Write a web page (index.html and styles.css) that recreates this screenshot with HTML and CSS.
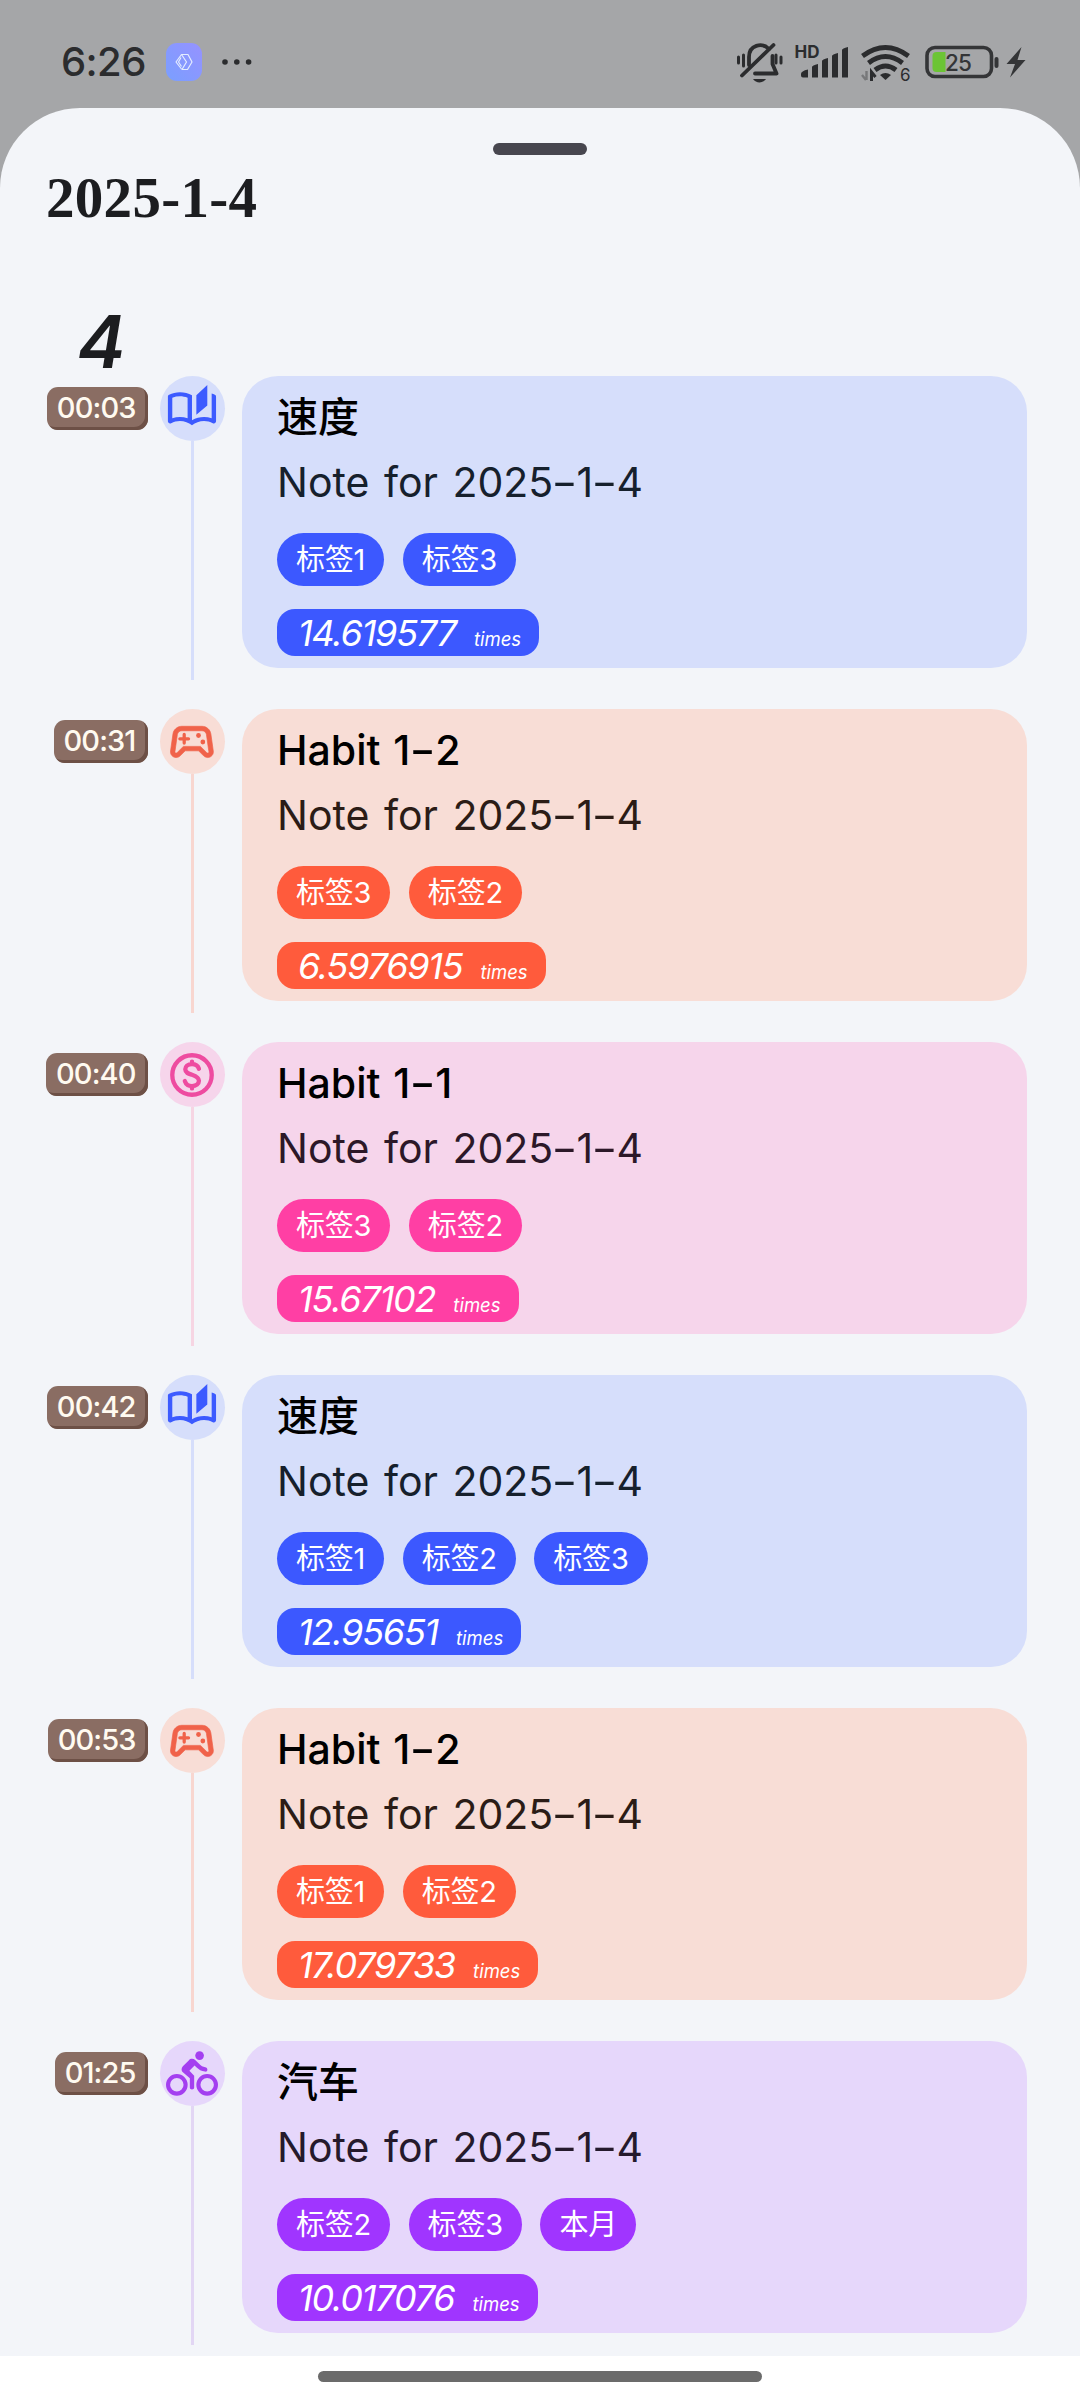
FILE: index.html
```html
<!DOCTYPE html>
<html lang="zh-CN">
<head>
<meta charset="utf-8">
<title>2025-1-4</title>
<link rel="stylesheet" href="styles.css">
</head>
<body>
<svg class="sprite" aria-hidden="true">
  <symbol id="book" viewBox="0 0 24 24"><path transform="translate(-.13 .45) scale(1.01 .95)" d="M22.47 5.2c-.47-.24-.96-.44-1.47-.61v12.03c-1.14-.41-2.31-.62-3.5-.62-1.9 0-3.78.54-5.5 1.58V5.48C10.38 4.55 8.51 4 6.5 4c-1.79 0-3.48.44-4.97 1.2C1.2 5.36 1 5.71 1 6.08v12.08c0 .58.47.99 1 .99.16 0 .32-.04.48-.12C3.69 18.4 5.05 18 6.5 18c2.07 0 3.98.82 5.5 2 1.52-1.18 3.43-2 5.5-2 1.45 0 2.81.4 4.02 1.04.16.08.32.12.48.12.52 0 1-.41 1-.99V6.08c0-.37-.2-.72-.53-.88zM10 16.62C8.86 16.21 7.69 16 6.5 16s-2.36.21-3.5.62V6.71C4.11 6.24 5.28 6 6.5 6c1.2 0 2.39.25 3.5.72v9.9zM19 .5l-5 5V15l5-4.5V.5z"/></symbol>
  <symbol id="game" viewBox="0 0 24 24"><path transform="translate(-.4 -.4) scale(1.03)" fill-rule="evenodd" stroke="currentColor" stroke-width=".3" d="M21.58 16.09l-1.09-7.66C20.21 6.46 18.52 5 16.53 5H7.47C5.48 5 3.79 6.46 3.51 8.43l-1.09 7.66C2.2 17.63 3.39 19 4.94 19c.68 0 1.32-.27 1.8-.75L9 16h6l2.25 2.25c.48.48 1.13.75 1.8.75 1.56 0 2.75-1.37 2.53-2.91zM19.48 16.81c-.08.09-.21.19-.42.19-.15 0-.29-.06-.39-.16L15.83 14H8.17l-2.84 2.84c-.1.1-.24.16-.39.16-.21 0-.34-.1-.42-.19-.08-.09-.16-.23-.13-.44l1.09-7.66C5.63 7.74 6.48 7 7.47 7h9.06c.99 0 1.84.74 1.98 1.72l1.09 7.66c.03.2-.05.34-.12.43z"/><path d="M8.4 8.5v4M6.4 10.5h4" fill="none" stroke="currentColor" stroke-width="1.500" stroke-linecap="round"/><circle cx="15" cy="9" r="1.1"/><circle cx="17" cy="12" r="1.1"/></symbol>
  <symbol id="coin" viewBox="0 0 24 24"><g fill="none" stroke="currentColor" stroke-width="2"><circle cx="12" cy="12" r="9.1"/><path stroke-linecap="round" d="M15.2 9.1C14.700 7.700 13.700 7 12 7c-2 0-3.100 1-3.100 2.400 0 1.600 1.500 2 3.100 2.500 1.800.6 3.200 1.200 3.200 2.800 0 1.400-1.300 2.400-3.200 2.400-1.700 0-2.800-.8-3.300-2.300M12 5.800v1M12 17.200v1"/></g></symbol>
  <symbol id="bike" viewBox="0 0 24 24"><circle cx="15.5" cy="3.5" r="2"/><g fill="none" stroke="currentColor" stroke-width="1.9"><circle cx="5" cy="17" r="4.05"/><circle cx="19" cy="17" r="4.05"/></g><path d="M10.8 10.5l2.4-2.4.8.8c1.1 1.1 2.4 1.8 4 2 .7.1 1.1-.3 1.1-.9 0-.7-.4-1-1-1.1-1.1-.2-2-.7-2.6-1.4l-1.9-1.9c-.5-.4-1-.6-1.6-.6s-1.1.2-1.4.6L7.8 8.4c-.4.4-.6.9-.6 1.4 0 .6.2 1.1.6 1.4L11 14v4.2c0 .5.4.9 1 .9s1-.4 1-.9v-5.400l-2.200-2.300z"/></symbol>
</svg>

<header class="status">
  <span class="clock">6:26</span>
  <svg class="app" viewBox="0 0 36 38"><defs><linearGradient id="appbg" x1="1" y1="0" x2="0" y2="1"><stop offset="0" stop-color="#9692ff"/><stop offset="1" stop-color="#7a9fff"/></linearGradient></defs><rect width="36" height="38" rx="11" fill="url(#appbg)"/><g fill="none" stroke="#e4ecff" stroke-width="1.2" stroke-linejoin="round"><path d="M15.500 11.500h6.500l4 7.500-4.500 7.500h-5.500l4.500-7.500z"/><path d="M15.500 11.500L10 19l5.500 7 M15 14.500L12.500 19l3 4.500"/></g></svg>
  <svg class="dots" viewBox="0 0 30 6"><circle cx="3" cy="3" r="2.800"/><circle cx="14.800" cy="3" r="2.800"/><circle cx="26.600" cy="3" r="2.800"/></svg>
  <div class="indicators">
    <svg width="48" height="42" viewBox="736 41 48 42"><g fill="none" stroke="#2b2c2e" stroke-width="3.800" stroke-linecap="round" stroke-linejoin="round"><path d="M749 65v-8c0-12 13-15 20-8"/><path d="M772.500 56v8l4 9.500H755M742 75.500L773.500 45"/><path stroke-width="3" d="M738.500 57v6M743.500 55v11M776 55v8M781 57v6"/></g><path d="M753 79h13c-3 4.500-10 4.500-13 0z" fill="#2b2c2e"/></svg>
    <svg width="56" height="42" viewBox="793 41 56 42" fill="#2b2c2e"><text class="hd" x="794.500" y="57.500">HD</text><path d="M801 74q0-3 7-4.500V77.500H803q-2 0-2-2zM812 67q0-1.500 6-3V77.500H812zM822 61q0-1.500 6-3V77.500H822zM832 56q0-1.500 6-3V77.500H832zM842 50q0-1.500 6-3V77.500H842z"/></svg>
    <svg width="54" height="50" viewBox="860 37 54 50"><g fill="none" stroke="#2b2c2e" stroke-width="4.800"><path d="M862.500 56q23-17 46 0"/><path d="M868.500 63q17-13 34 0"/><path d="M875 70q10.500-8 21 0"/></g><path d="M880 75q5.500-4 11 0l-5.500 5z" fill="#2b2c2e"/><path d="M866.500 71v9M866 80l-4-5" stroke="#77787a" stroke-width="2.400"/><path d="M871.500 81v-9l4 5" fill="none" stroke="#2b2c2e" stroke-width="3"/><text class="gen" x="900" y="81">6</text></svg>
    <svg width="75" height="34" viewBox="925 45 75 34"><rect x="927" y="47.500" width="64.500" height="29" rx="8" fill="none" stroke="#343537" stroke-width="3.600"/><path d="M945.500 52h-9q-4 0-4 4v12q0 4 4 4h9z" fill="#6cc435"/><rect x="994.500" y="57" width="4" height="11" rx="2" fill="#343537"/><text class="pct" x="945" y="70.500">25</text></svg>
    <svg width="20" height="32" viewBox="1006 46 20 32"><path d="M1021.500 47L1006.500 64h8.500l-5 13.500 15.500-17.500h-8z" fill="#343537"/></svg>
  </div>
</header>

<main class="sheet">
  <div class="handle"></div>
  <h1 class="date">2025-1-4</h1>
  <div class="day">4</div>
  <section class="timeline">

    <article class="row blue">
      <div class="time"><span>00:03</span></div>
      <div class="marker"><span class="disc"><svg><use href="#book"/></svg></span></div>
      <div class="card">
        <h2>速度</h2>
        <p class="note">Note for 2025<i>-</i>1<i>-</i>4</p>
        <div class="tags"><span>标签1</span><span>标签3</span></div>
        <div class="value"><b>14.619577</b><small>times</small></div>
      </div>
    </article>

    <article class="row orange">
      <div class="time"><span>00:31</span></div>
      <div class="marker"><span class="disc"><svg><use href="#game"/></svg></span></div>
      <div class="card">
        <h2>Habit 1<i>-</i>2</h2>
        <p class="note">Note for 2025<i>-</i>1<i>-</i>4</p>
        <div class="tags"><span>标签3</span><span>标签2</span></div>
        <div class="value"><b>6.5976915</b><small>times</small></div>
      </div>
    </article>

    <article class="row pink">
      <div class="time"><span>00:40</span></div>
      <div class="marker"><span class="disc"><svg><use href="#coin"/></svg></span></div>
      <div class="card">
        <h2>Habit 1<i>-</i>1</h2>
        <p class="note">Note for 2025<i>-</i>1<i>-</i>4</p>
        <div class="tags"><span>标签3</span><span>标签2</span></div>
        <div class="value"><b>15.67102</b><small>times</small></div>
      </div>
    </article>

    <article class="row blue">
      <div class="time"><span>00:42</span></div>
      <div class="marker"><span class="disc"><svg><use href="#book"/></svg></span></div>
      <div class="card">
        <h2>速度</h2>
        <p class="note">Note for 2025<i>-</i>1<i>-</i>4</p>
        <div class="tags"><span>标签1</span><span>标签2</span><span>标签3</span></div>
        <div class="value"><b>12.95651</b><small>times</small></div>
      </div>
    </article>

    <article class="row orange">
      <div class="time"><span>00:53</span></div>
      <div class="marker"><span class="disc"><svg><use href="#game"/></svg></span></div>
      <div class="card">
        <h2>Habit 1<i>-</i>2</h2>
        <p class="note">Note for 2025<i>-</i>1<i>-</i>4</p>
        <div class="tags"><span>标签1</span><span>标签2</span></div>
        <div class="value"><b>17.079733</b><small>times</small></div>
      </div>
    </article>

    <article class="row purple">
      <div class="time"><span>01:25</span></div>
      <div class="marker"><span class="disc"><svg><use href="#bike"/></svg></span></div>
      <div class="card">
        <h2>汽车</h2>
        <p class="note">Note for 2025<i>-</i>1<i>-</i>4</p>
        <div class="tags"><span>标签2</span><span>标签3</span><span>本月</span></div>
        <div class="value"><b>10.017076</b><small>times</small></div>
      </div>
    </article>

  </section>
</main>
<footer class="nav"><div class="home"></div></footer>
</body>
</html>
```
FILE: styles.css
```css
* { box-sizing: border-box; margin: 0; padding: 0; }
body {
  width: 1080px;
  height: 2403px;
  overflow: hidden;
  background: linear-gradient(#a5a6a8 0 300px, #fff 300px);
  font-family: Inter, "Noto Sans CJK SC", sans-serif;
  color: #1c1d20;
}
svg { display: block; flex: none; }
.sprite { width: 0; height: 0; position: absolute; }

.status { height: 108px; display: flex; align-items: center; padding: 16px 54px 0 61px; }
.clock { width: 105px; font-size: 40px; font-weight: 450; line-height: 48px; color: #2b2c2e; letter-spacing: -.6px; }
.app { width: 36px; height: 38px; }
.dots { width: 30px; height: 6px; margin-left: 20px; fill: #2b2c2e; }
.indicators { margin-left: auto; display: flex; align-items: center; gap: 11px; }
.indicators svg:first-child { margin-right: -2px; }
.indicators svg:last-child { margin-left: -5px; }
.hd { font-size: 17px; font-weight: 700; }
.gen { font-size: 17px; fill: #2b2c2e; }
.pct { font-size: 22.500px; font-weight: 500; fill: #343537; letter-spacing: -.8px; }

.sheet { height: 2248px; border-radius: 80px 80px 0 0; background: #f3f5f9; overflow: hidden; padding-top: 35px; }
.handle { width: 94px; height: 12px; border-radius: 6px; background: #47464f; margin: 0 auto; }
.date { height: 84px; padding: 8px 0 0 46px; font: bold 57px/70px "Liberation Serif", serif; letter-spacing: .3px; }
.day { height: 137px; padding: 59px 0 0 77px; font-size: 73px; font-style: italic; font-weight: 600; line-height: 88px; }

.timeline { display: grid; grid-auto-rows: 333px; }
.row { display: grid; grid-template-columns: 148px 65px 791px; column-gap: 11.500px; align-items: start; }
.time { display: flex; justify-content: flex-end; padding-top: 11px; }
.time span {
  height: 43px;
  padding: 0 12.500px 0 10px;
  border-radius: 11px;
  background: #8a6d63;
  box-shadow: inset -3px -3px 0 #6d5046;
  color: #fffaf0;
  font-size: 29px;
  font-weight: 550;
  line-height: 42px;
  letter-spacing: -.9px;
}
.marker { height: 304px; display: flex; flex-direction: column; align-items: center; }
.marker::after { content: ""; width: 3px; flex: 1; background: var(--line); }
.disc { width: 65px; height: 65px; border-radius: 50%; background: var(--soft); display: grid; place-items: center; color: var(--icon); }
.disc svg { width: 52px; height: 52px; fill: currentColor; }

.card { width: 785px; height: 292px; margin-left: 6px; border-radius: 36px; background: var(--soft); padding: 12px 35px 0; }
h2 { height: 58px; font-size: 41px; font-weight: 500; line-height: 59px; color: #000; word-spacing: 2px; }
h2 i, .note i { display: inline-block; margin: 0 2.200px; font-style: normal; transform: scaleX(1.400); }
h2 i { margin: 0 3px; }
.note { height: 72px; font-size: 41px; line-height: 72px; color: var(--ink); word-spacing: 3px; }
.tags { display: flex; gap: 18.500px; margin-top: 15px; height: 53px; }
.tags span { padding: 0 19px; border-radius: 27px; background: var(--solid); color: #fff; font-size: 29px; line-height: 54px; letter-spacing: -.2px; }
.value {
  display: inline-flex;
  align-items: baseline;
  margin-top: 23px;
  height: 47px;
  padding: 0 18px 0 21px;
  border-radius: 18px;
  background: var(--solid);
  color: #fff;
  font-style: italic;
  line-height: 49px;
}
.value b { font-size: 36px; font-weight: 400; letter-spacing: -1.200px; }
.value small { font-size: 18.500px; margin-left: 18px; }

.blue { --soft: #d6defb; --line: #d6defb; --solid: #3c58ff; --icon: #3c5aff; --ink: #16202c; }
.orange { --soft: #f8ddd6; --line: #f8d6d0; --solid: #ff5b3c; --icon: #f0624a; --ink: #2b1c16; }
.pink { --soft: #f6d5eb; --line: #f6d5e3; --solid: #ff3fa4; --icon: #ee4ba0; --ink: #2c1828; }
.purple { --soft: #e6d7fb; --line: #e2d6f4; --solid: #a035ff; --icon: #a43ff0; --ink: #251a2c; }

.nav { height: 47px; background: #fff; padding-top: 15px; }
.home { width: 444px; height: 11px; border-radius: 6px; background: #6b6b6b; margin: 0 auto; }
```
